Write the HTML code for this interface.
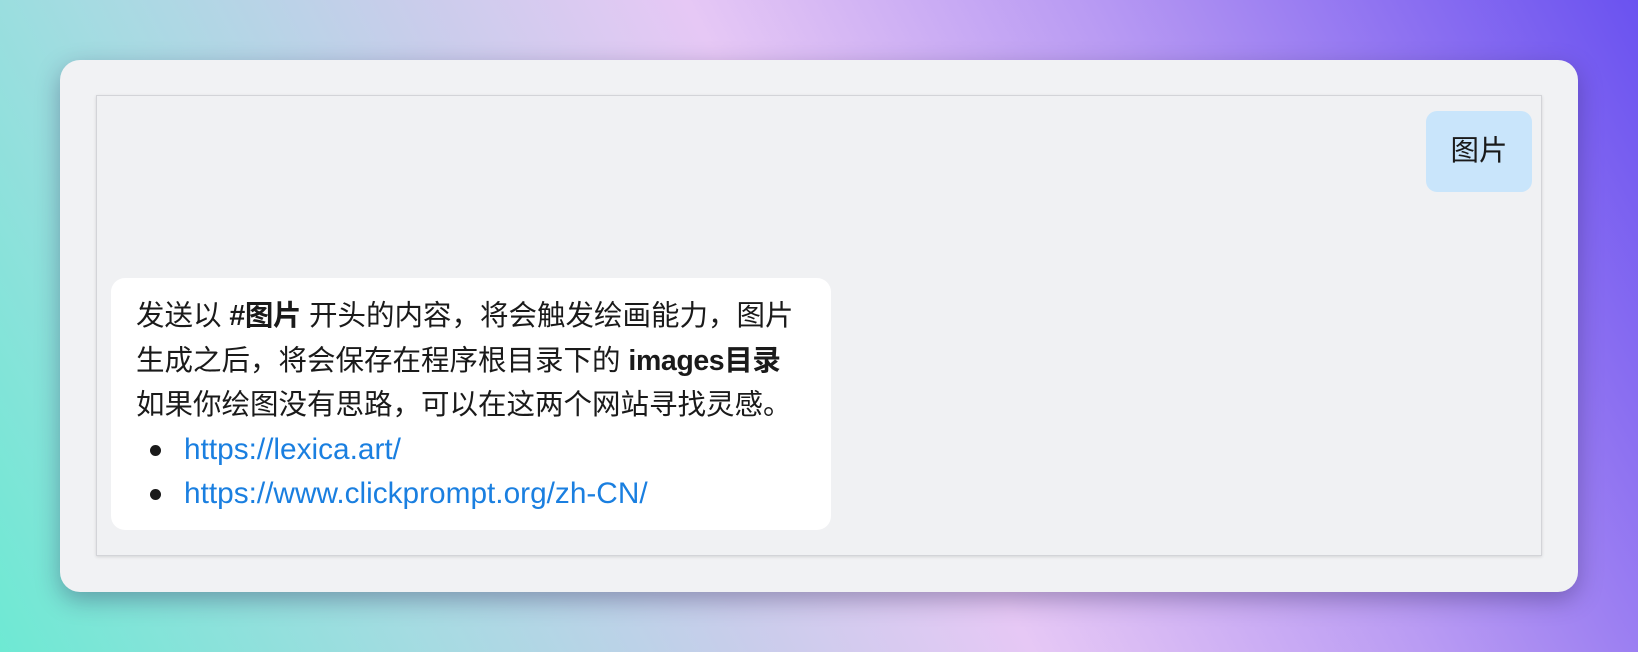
<!DOCTYPE html>
<html><head><meta charset="utf-8"><style>
html,body{margin:0;padding:0}
body{width:1638px;height:652px;overflow:hidden;position:relative;
background:linear-gradient(62deg,#6ee9d3 0%,#a6dbe2 22%,#c9cdeb 38%,#e6c8f5 52%,#b99bf3 72%,#8c70f1 88%,#6a52f0 100%);
font-family:"Liberation Sans","Noto Sans CJK SC",sans-serif;color:#1a1a1a}
.card{position:absolute;left:60px;top:60px;width:1518px;height:532px;background:#f1f2f4;border-radius:20px;box-shadow:0 8px 24px rgba(40,30,80,.35)}
.inner{position:absolute;left:96px;top:95px;width:1444px;height:459px;background:#f0f1f3;border:1px solid #d3d4d8;box-shadow:0 1px 3px rgba(0,0,0,.12)}
.user{position:absolute;left:1426px;top:111px;width:106px;height:81px;background:#c9e5fb;border-radius:11px;font-size:28.5px;line-height:81px;text-align:center}
.bot{position:absolute;left:111px;top:278px;width:720px;height:252px;background:#fff;border-radius:14px;box-sizing:border-box;padding:16px 0 0 25px;font-size:28.5px;line-height:44.5px;white-space:nowrap}
.bot b{font-weight:600;letter-spacing:-0.4px}
ul{margin:0;padding:0 0 0 48px;list-style:none}
li{position:relative;font-size:29.8px}
li::before{content:"";position:absolute;left:-34px;top:17px;width:11px;height:11px;border-radius:50%;background:#1a1a1a}
a{color:#1a7fe0;text-decoration:none}
</style></head><body>
<div class="card"></div>
<div class="inner"></div>
<div class="user">图片</div>
<div class="bot">发送以 <b>#图片</b> 开头的内容，将会触发绘画能力，图片<br>生成之后，将会保存在程序根目录下的 <b>images目录</b><br>如果你绘图没有思路，可以在这两个网站寻找灵感。
<ul><li><a>https://lexica.art/</a></li><li><a>https://www.clickprompt.org/zh-CN/</a></li></ul></div>
</body></html>
